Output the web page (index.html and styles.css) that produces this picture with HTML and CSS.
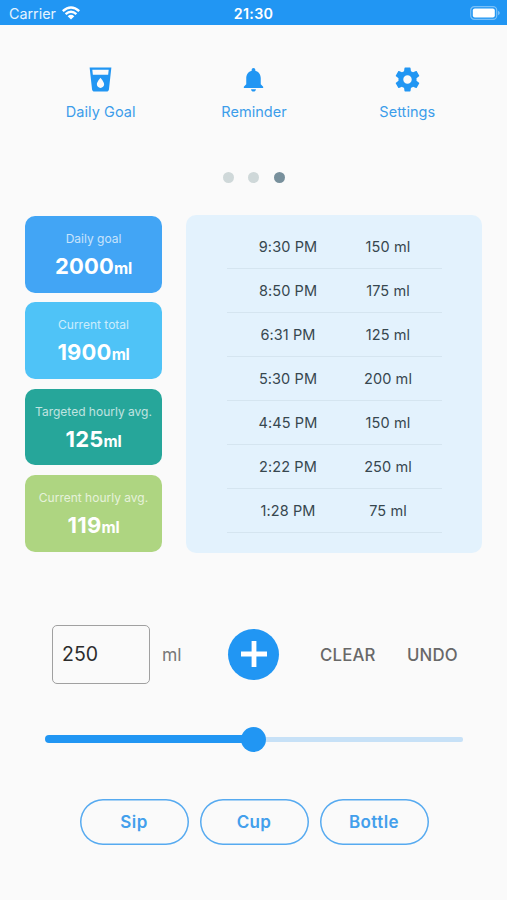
FILE: index.html
```html
<!DOCTYPE html>
<html lang="en">
<head>
<meta charset="utf-8">
<title>Water Tracker</title>
<link rel="stylesheet" href="styles.css">
</head>
<body>
<header class="status">
  <div class="carrier"><span>Carrier</span>
    <svg class="wifi" viewBox="0 0 18 14"><path d="M.8 5.2Q9-2.2 17.2 5.2M3.6 8.2Q9 3.5 14.4 8.2" fill="none" stroke="#fff" stroke-width="2.4"/><path d="M5.7 10.3Q9 7.4 12.3 10.3L9 13.6z" fill="#fff"/></svg>
  </div>
  <div class="clock">21:30</div>
  <svg class="battery" viewBox="0 0 30 14"><rect x=".7" y=".7" width="26" height="12.6" rx="3.6" fill="none" stroke="#fff" stroke-opacity=".4" stroke-width="1.2"/><rect x="2.8" y="2.6" width="22" height="8.8" rx="2" fill="#fff"/><path d="M28.2 4.8q1.5.7 1.5 2.2t-1.5 2.2z" fill="#fff" fill-opacity=".5"/></svg>
</header>
<nav class="menu">
  <a class="menu-item"><svg viewBox="0 0 24 24"><path d="M3 2l2.01 18.23C5.13 21.23 5.97 22 7 22h10c1.03 0 1.87-.77 1.99-1.77L21 2H3zm9 17c-1.66 0-3-1.34-3-3 0-2 3-5.4 3-5.4s3 3.4 3 5.4c0 1.66-1.34 3-3 3zm6.33-11H5.67l-.44-4h13.55l-.45 4z"/></svg><span>Daily Goal</span></a>
  <a class="menu-item"><svg viewBox="0 0 24 24"><path d="M12 22c1.1 0 2-.9 2-2h-4c0 1.1.89 2 2 2zm6-6v-5c0-3.07-1.64-5.64-4.5-6.32V4c0-.83-.67-1.5-1.5-1.5s-1.5.67-1.5 1.5v.68C7.63 5.36 6 7.92 6 11v5l-2 2v1h16v-1l-2-2z"/></svg><span>Reminder</span></a>
  <a class="menu-item"><svg viewBox="0 0 24 24"><path d="M19.43 12.98c.04-.32.07-.64.07-.98s-.03-.66-.07-.98l2.11-1.65c.19-.15.24-.42.12-.64l-2-3.46c-.12-.22-.39-.3-.61-.22l-2.49 1c-.52-.4-1.08-.73-1.69-.98l-.38-2.65C14.46 2.18 14.25 2 14 2h-4c-.25 0-.46.18-.49.42l-.38 2.65c-.61.25-1.17.59-1.69.98l-2.49-1c-.23-.09-.49 0-.61.22l-2 3.46c-.13.22-.07.49.12.64l2.11 1.65c-.04.32-.07.65-.07.98s.03.66.07.98l-2.11 1.65c-.19.15-.24.42-.12.64l2 3.46c.12.22.39.3.61.22l2.49-1c.52.4 1.08.73 1.69.98l.38 2.65c.03.24.24.42.49.42h4c.25 0 .46-.18.49-.42l.38-2.65c.61-.25 1.17-.59 1.69-.98l2.49 1c.23.09.49 0 .61-.22l2-3.46c.12-.22.07-.49-.12-.64l-2.11-1.65zM12 15.5c-1.93 0-3.5-1.57-3.5-3.5s1.57-3.5 3.5-3.5 3.5 1.57 3.5 3.5-1.57 3.5-3.5 3.5z"/></svg><span>Settings</span></a>
</nav>
<div class="dots"><i></i><i></i><i class="active"></i></div>
<main class="overview">
  <section class="stats">
    <div class="stat goal"><span class="label">Daily goal</span><strong>2000<small>ml</small></strong></div>
    <div class="stat total"><span class="label">Current total</span><strong>1900<small>ml</small></strong></div>
    <div class="stat target"><span class="label">Targeted hourly avg.</span><strong>125<small>ml</small></strong></div>
    <div class="stat current"><span class="label">Current hourly avg.</span><strong>119<small>ml</small></strong></div>
  </section>
  <section class="log">
    <div class="entry"><span>9:30 PM</span><span>150 ml</span></div>
    <div class="entry"><span>8:50 PM</span><span>175 ml</span></div>
    <div class="entry"><span>6:31 PM</span><span>125 ml</span></div>
    <div class="entry"><span>5:30 PM</span><span>200 ml</span></div>
    <div class="entry"><span>4:45 PM</span><span>150 ml</span></div>
    <div class="entry"><span>2:22 PM</span><span>250 ml</span></div>
    <div class="entry"><span>1:28 PM</span><span>75 ml</span></div>
  </section>
</main>
<section class="controls">
  <div class="amount">250</div>
  <span class="unit">ml</span>
  <div class="add"><svg viewBox="0 0 26 26"><path d="M13 0v26M0 13h26" stroke="#fff" stroke-width="4.8"/></svg></div>
  <span class="action clear">CLEAR</span>
  <span class="action">UNDO</span>
</section>
<div class="slider"><div class="filled"></div><div class="thumb"></div><div class="rest"></div></div>
<section class="presets"><div class="preset">Sip</div><div class="preset">Cup</div><div class="preset">Bottle</div></section>
</body>
</html>
```
FILE: styles.css
```css
* { box-sizing: border-box; }
body {
  margin: 0;
  height: 900px;
  overflow: hidden;
  background: #fafafa;
  font-family: Inter, "Liberation Sans", sans-serif;
  color: #37474f;
}
svg { display: block; }
.status {
  height: 25px;
  padding: 2px 7px 0 9px;
  display: grid;
  grid-template-columns: 1fr auto 1fr;
  align-items: center;
  background: #2196f3;
  color: #fff;
}
.carrier { display: flex; align-items: center; gap: 6px; font-size: 14.3px; color: #e6f3fe; }
.wifi { width: 18px; height: 14px; margin-top: -2px; }
.clock { font-size: 14.3px; font-weight: 600; letter-spacing: .3px; margin-right: 2px; }
.battery { width: 30px; height: 14px; justify-self: end; margin-top: -1px; }
.menu {
  display: grid;
  grid-template-columns: repeat(3, 153.3px);
  justify-content: center;
  margin: 39.5px 0 0 1px;
}
.menu-item { display: flex; flex-direction: column; align-items: center; color: #3c9dea; font-size: 14.5px; line-height: 20px; letter-spacing: .05px; }
.menu-item svg { width: 29px; height: 29px; fill: #2196f3; margin-bottom: 8.5px; }
.dots { display: flex; justify-content: center; gap: 14.5px; margin-top: 50px; height: 11px; }
.dots i { width: 11px; height: 11px; border-radius: 50%; background: #cfd8d9; }
.dots .active { background: #78909c; }
.overview { display: flex; gap: 24px; padding: 0 24px 0 25px; margin-top: 32px; }
.stats { width: 137px; display: flex; flex-direction: column; gap: 9.7px; padding-top: 1px; }
.stat {
  height: 76.7px;
  border-radius: 10px;
  display: flex;
  flex-direction: column;
  align-items: center;
  padding-top: 15px;
  color: #fff;
}
.label { font-size: 12px; line-height: 16px; opacity: .7; white-space: nowrap; }
.stat strong { font-size: 22px; line-height: 28px; margin-top: 5px; font-weight: 700; letter-spacing: .2px; }
.stat small { font-size: 15.5px; letter-spacing: -.2px; }
.goal { background: #42a5f5; }
.total { background: #4fc3f7; }
.target { background: #26a69a; }
.current { background: #aed581; }
.log { width: 296px; height: 338px; padding: 10px 40px 0 41px; border-radius: 10px; background: #e3f2fd; }
.entry {
  height: 44px;
  display: grid;
  grid-template-columns: 100px 100px;
  justify-content: center;
  align-items: center;
  text-align: center;
  padding-left: 7px;
  border-bottom: 1px solid #d5e5f0;
  font-size: 14.5px;
  letter-spacing: .1px;
}
.controls { display: flex; align-items: center; height: 60px; margin: 71px 0 0 52px; }
.amount {
  width: 98px;
  height: 59px;
  border: 1.5px solid #a0a0a0;
  border-radius: 5px;
  padding-left: 9px;
  font-size: 19.5px;
  line-height: 56px;
  color: #2c2c2c;
}
.unit { width: 78px; padding-left: 12px; font-size: 17.5px; color: #777; }
.add { width: 51px; height: 51px; border-radius: 50%; background: #2196f3; display: grid; place-items: center; }
.add svg { width: 26px; height: 26px; }
.action { font-size: 16.8px; font-weight: 500; color: #686868; letter-spacing: .2px; padding-top: 1px; }
.clear { width: 87px; margin-left: 41px; }
.slider { display: flex; align-items: center; width: 418px; height: 26px; margin: 42px 0 0 45px; }
.filled { width: 197px; height: 7.5px; border-radius: 4px 0 0 4px; background: #2196f3; }
.thumb { width: 25px; height: 25px; border-radius: 50%; background: #2196f3; margin-left: -1px; }
.rest { flex: 1; height: 5px; border-radius: 0 2px 2px 0; background: #c7e1f7; }
.presets { display: flex; gap: 11px; margin: 47px 0 0 79.5px; }
.preset {
  width: 109px;
  height: 46px;
  box-shadow: inset 0 0 0 1.5px #56aaf0;
  border-radius: 23px;
  text-align: center;
  font-size: 17px;
  font-weight: 600;
  line-height: 46px;
  letter-spacing: .4px;
  color: #439fec;
}
```
